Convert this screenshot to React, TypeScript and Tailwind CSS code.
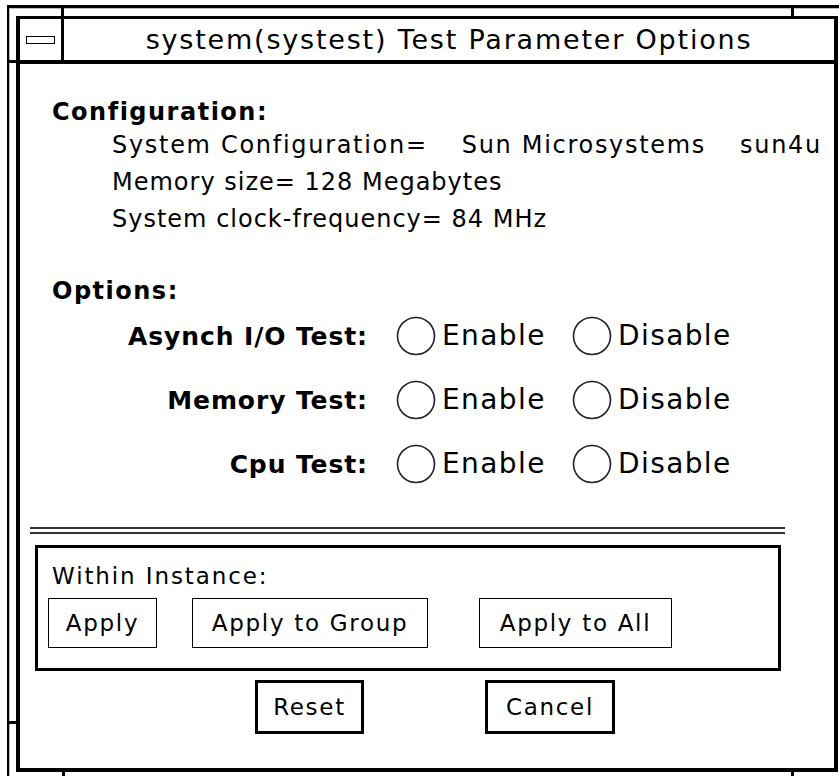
import React from "react";

const OPTIONS = ["Asynch I/O Test:", "Memory Test:", "Cpu Test:"];

function Radio({ label }: { label: string }) {
  return (
    <div className="flex items-center gap-[6px]">
      <svg width="40" height="40" viewBox="0 0 40 40" className="shrink-0">
        <circle cx="20" cy="20" r="18.5" fill="white" stroke="#222" strokeWidth="1.6" />
      </svg>
      <span className="text-[28px] leading-none tracking-[1.4px]">{label}</span>
    </div>
  );
}

export default function App() {
  return (
    <div className="relative w-[839px] h-[776px] overflow-hidden bg-white pl-[7px] pt-[5px] text-black font-['DejaVu_Sans',sans-serif]">
      {/* resize frame corner marks */}
      <div className="absolute left-[61px] top-[5px] w-[3px] h-[12px] bg-black" />
      <div className="absolute left-[791px] top-[5px] w-[3px] h-[12px] bg-black" />
      <div className="absolute left-[7px] top-[60px] w-[10px] h-[3px] bg-black" />
      <div className="absolute left-[7px] top-[721px] w-[10px] h-[3px] bg-black" />
      <div className="absolute left-[62px] top-[770px] w-[3px] h-[6px] bg-black" />
      <div className="absolute left-[791px] top-[770px] w-[3px] h-[6px] bg-black" />

      {/* outer resize frame */}
      <div className="h-[771px] border-t-[3px] border-l-2 border-black">
        <div className="h-full border-t border-l border-[#bdbdbd] pl-[6px] pt-[7px]">
          {/* window */}
          <div className="w-[822px] h-[756px] border-[4px] border-t-[3px] border-black flex flex-col">
            {/* title bar */}
            <div className="h-[45px] shrink-0 flex border-b-[4px] border-black">
              <div className="w-[44px] h-full border-r-[3px] border-black flex items-center justify-center">
                <div className="w-[29px] h-[8px] border-[1.5px] border-black bg-white" />
              </div>
              <div className="flex-1 flex items-center justify-center text-[27px] tracking-[1.8px] leading-none pb-[1px]">
                system(systest) Test Parameter Options
              </div>
            </div>

            {/* body */}
            <div className="flex-1 flex flex-col pl-[32px] pt-[36px]">
              <div className="text-[24px] font-bold leading-none h-[22px] tracking-[1.5px]">Configuration:</div>
              <div className="pl-[60px] mt-[5px] text-[24px] leading-[37px] tracking-[1px] whitespace-pre">
                <div className="tracking-[1.7px]">
                  System Configuration=<span className="ml-[34px]">Sun Microsystems</span>
                  <span className="ml-[34px]">sun4u</span>
                </div>
                <div>Memory size= 128 Megabytes</div>
                <div>System clock-frequency= 84 MHz</div>
              </div>
              <div className="mt-[41px] text-[24px] font-bold leading-none h-[22px] tracking-[1.5px]">Options:</div>

              <div className="mt-[15px] flex flex-col gap-[24px]">
                {OPTIONS.map((o) => (
                  <div key={o} className="flex items-center h-[40px]">
                    <div className="w-[316px] text-right text-[25px] font-bold leading-none tracking-[0.9px]">{o}</div>
                    <div className="ml-[28px] w-[176px]">
                      <Radio label="Enable" />
                    </div>
                    <Radio label="Disable" />
                  </div>
                ))}
              </div>
            </div>

            {/* separator */}
            <div className="ml-[10px] w-[755px] h-[7px] border-t-2 border-b-2 border-[#333] shrink-0" />

            {/* within instance */}
            <div className="ml-[15px] mt-[11px] w-[746px] h-[126px] border-[3px] border-black pl-[14px] pt-[17px] shrink-0">
              <div className="text-[23px] leading-none tracking-[1.9px]">Within Instance:</div>
              <div className="mt-[10px] ml-[-4px] flex text-[23px] tracking-[1.7px]">
                <button className="w-[109px] h-[50px] border-[1.5px] border-black">Apply</button>
                <button className="ml-[35px] w-[236px] h-[50px] border-[1.5px] border-black">Apply to Group</button>
                <button className="ml-[51px] w-[193px] h-[50px] border-[1.5px] border-black">Apply to All</button>
              </div>
            </div>

            <div className="mt-[9px] mb-[34px] flex text-[23px] tracking-[1.7px] shrink-0">
              <button className="ml-[235px] w-[109px] h-[54px] border-[3px] border-black">Reset</button>
              <button className="ml-[121px] w-[130px] h-[54px] border-[3px] border-black">Cancel</button>
            </div>
          </div>
        </div>
      </div>
    </div>
  );
}
